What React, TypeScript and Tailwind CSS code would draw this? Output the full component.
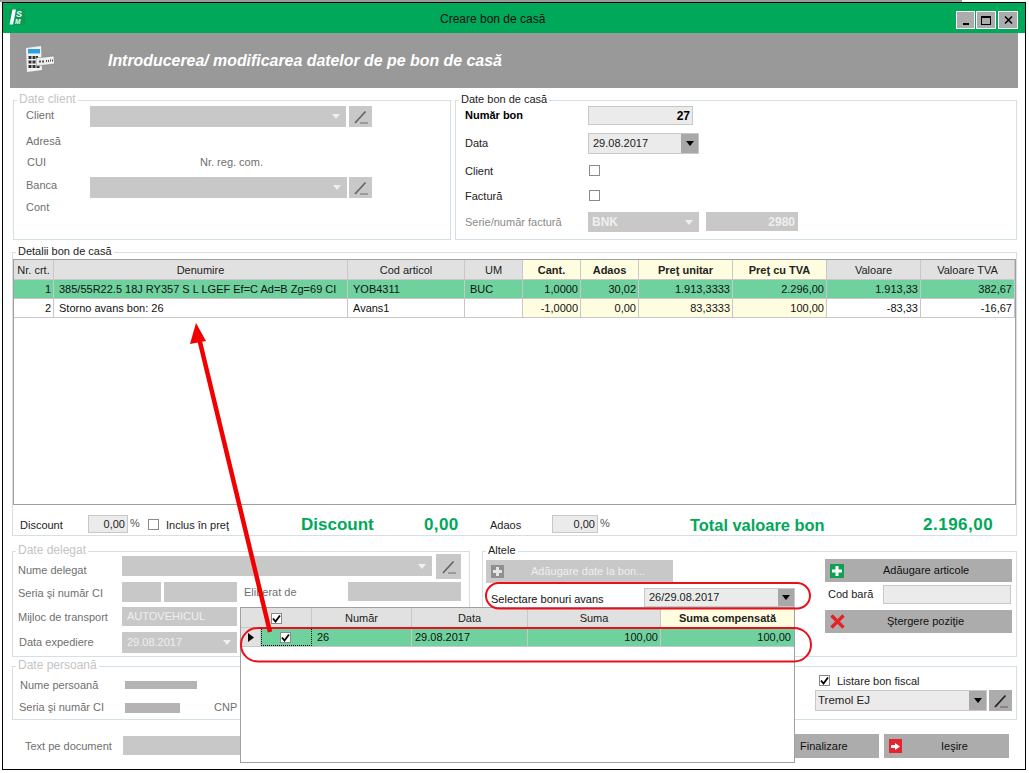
import type { ReactNode } from 'react';

const columns = [
    { label: 'Nr. crt.', w: 'w-[40px]', head: 'bg-[#e1e1e1] font-normal' },
    { label: 'Denumire', w: 'w-[294px]', head: 'bg-[#e1e1e1] font-normal' },
    { label: 'Cod articol', w: 'w-[117px]', head: 'bg-[#e1e1e1] font-normal' },
    { label: 'UM', w: 'w-[58px]', head: 'bg-[#e1e1e1] font-normal' },
    { label: 'Cant.', w: 'w-[58px]', head: 'bg-[#fffde0] font-bold' },
    { label: 'Adaos', w: 'w-[58px]', head: 'bg-[#fffde0] font-bold' },
    { label: 'Preţ unitar', w: 'w-[94px]', head: 'bg-[#fffde0] font-bold' },
    { label: 'Preţ cu TVA', w: 'w-[94px]', head: 'bg-[#fffde0] font-bold' },
    { label: 'Valoare', w: 'w-[94px]', head: 'bg-[#e1e1e1] font-normal' },
    { label: 'Valoare TVA', w: 'w-[94px]', head: 'bg-[#e1e1e1] font-normal' },
];

const rows = [
    ['1', '385/55R22.5 18J RY357 S L LGEF Ef=C Ad=B Zg=69 CI', 'YOB4311', 'BUC', '1,0000', '30,02', '1.913,3333', '2.296,00', '1.913,33', '382,67'],
    ['2', 'Storno avans bon: 26', 'Avans1', '', '-1,0000', '0,00', '83,3333', '100,00', '-83,33', '-16,67'],
];

const alignRight = [true, false, false, false, true, true, true, true, true, true];

function T({ className, children }: { className: string; children: ReactNode }) {
    return <div className={`absolute whitespace-nowrap leading-[14px] ${className}`}>{children}</div>;
}

function Box({ className, children }: { className: string; children?: ReactNode }) {
    return <div className={`absolute ${className}`}>{children}</div>;
}

function Group({ className, title, titleClass }: { className: string; title?: string; titleClass?: string }) {
    return (
        <div className={`absolute border border-[#d5dfe6] ${className}`}>
            {title && (
                <div className={`absolute left-[3px] top-[-9px] bg-white px-[2px] leading-[14px] whitespace-nowrap ${titleClass}`}>{title}</div>
            )}
        </div>
    );
}

function Pen({ className, dark }: { className: string; dark?: boolean }) {
    return (
        <Box className={`flex items-center justify-center ${dark ? 'bg-[#acacac]' : 'bg-[#c8c8c8]'} ${className}`}>
            <svg width="16" height="16" viewBox="0 0 16 16">
                <path d="M2 14 L12.5 2.5" stroke={dark ? '#222' : '#666'} strokeWidth="1.8" fill="none" />
                <path d="M7 14 H15" stroke={dark ? '#777' : '#8c8c8c'} strokeWidth="1.5" fill="none" />
            </svg>
        </Box>
    );
}

function Caret({ color }: { color: string }) {
    return (
        <svg width="8" height="5" viewBox="0 0 8 5">
            <path d="M0 0 H8 L4 5 Z" fill={color} />
        </svg>
    );
}

function Check({ checked, className }: { checked?: boolean; className: string }) {
    return (
        <Box className={`w-[11px] h-[11px] border border-[#8a8a8a] bg-white flex items-center justify-center ${className}`}>
            {checked && (
                <svg width="9" height="9" viewBox="0 0 9 9">
                    <path d="M1 4.5 L3.5 7.5 L8 1.5" stroke="#000" strokeWidth="1.8" fill="none" />
                </svg>
            )}
        </Box>
    );
}

export default function App() {
    return (
        <div className="relative w-[1029px] h-[773px] overflow-hidden bg-white text-[11px] text-black [font-family:Liberation_Sans,Arial,sans-serif]">
            {/* desktop behind the window */}
            <Box className="left-0 top-0 w-[962px] h-[2px] bg-[#9a9a9a]" />

            {/* window frame */}
            <Box className="left-[2px] top-[2px] w-[1024px] h-[768px] border border-black bg-white" />

            {/* title bar */}
            <Box className="left-[3px] top-[3px] w-[1022px] h-[30px] bg-[#00a859]" />
            <T className="left-[440px] top-[12px] text-[12px] text-[#111]">Creare bon de casă</T>
            <Box className="left-[9px] top-[9px] w-[16px] h-[16px] bg-[#0b9a55]">
                <svg width="16" height="16" viewBox="0 0 16 16" fontFamily="Liberation Sans">
                    <path d="M3.5 0.5 H7 L4 15.5 H0.5 Z" fill="#fff" />
                    <text x="7" y="8" fontSize="9" fontWeight="700" fontStyle="italic" fill="#fff">S</text>
                    <text x="6" y="15" fontSize="6.5" fontWeight="700" fontStyle="italic" fill="#fff">M</text>
                </svg>
            </Box>
            <Box className="left-[956px] top-[11px] w-[19px] h-[18px] bg-[#acacac] border border-white flex items-end justify-center pb-[3px]">
                <div className="w-[6px] h-[2px] bg-black" />
            </Box>
            <Box className="left-[976px] top-[11px] w-[20px] h-[18px] bg-[#acacac] border border-white flex items-center justify-center">
                <div className="w-[10px] h-[9px] border border-black border-t-2" />
            </Box>
            <Box className="left-[998px] top-[11px] w-[20px] h-[18px] bg-[#acacac] border border-white flex items-center justify-center">
                <svg width="9" height="8" viewBox="0 0 9 8">
                    <path d="M1 0.5 L8 7.5 M8 0.5 L1 7.5" stroke="#000" strokeWidth="1.5" />
                </svg>
            </Box>

            {/* header band */}
            <Box className="left-[10px] top-[33px] w-[1008px] h-[55px] bg-[#999999]" />
            <Box className="left-[26px] top-[46px]">
                <svg width="29" height="26" viewBox="0 0 29 26">
                    <path d="M0 2 L15 0 L16 24 L1 26 Z" fill="#f2f2f2" />
                    <rect x="2" y="3" width="12" height="4.5" fill="#2f9fe0" />
                    <g fill="#333">
                        <rect x="2.5" y="10" width="3" height="3" /><rect x="6.5" y="10" width="3" height="3" /><rect x="10" y="10" width="2" height="3" />
                        <rect x="2.5" y="14.5" width="3" height="3" /><rect x="6.5" y="14.5" width="3" height="3" />
                        <rect x="2.5" y="19" width="3" height="3" /><rect x="6.5" y="19" width="3" height="3" /><rect x="10.5" y="19" width="3" height="3" />
                    </g>
                    <path d="M10 12 L28 10 L28.5 18 L10.5 20 Z" fill="#eee" stroke="#777" strokeWidth="0.5" />
                    <path d="M13 15.5 H15 M16 15.5 H18 M20 15 H21 M22 15 H23 M24 14.6 H25 M26 14.6 H27" stroke="#555" strokeWidth="2" />
                </svg>
            </Box>
            <T className="left-[108px] top-[52px] text-[15.9px] leading-[18px] font-bold italic text-white">Introducerea/ modificarea datelor de pe bon de casă</T>

            {/* date client */}
            <Group className="left-[13px] top-[100px] w-[438px] h-[140px]" title="Date client" titleClass="text-[12px] text-[#c4c4c4]" />
            <T className="left-[26px] top-[108px] text-[#6f6f6f]">Client</T>
            <Box className="left-[90px] top-[106px] w-[256px] h-[21px] bg-[#c8c8c8] flex items-center justify-end pr-[6px]"><Caret color="#efefef" /></Box>
            <Pen className="left-[349px] top-[106px] w-[23px] h-[21px]" />
            <T className="left-[26px] top-[134px] text-[#6f6f6f]">Adresă</T>
            <T className="left-[27px] top-[155px] text-[#6f6f6f]">CUI</T>
            <T className="left-[200px] top-[155px] text-[#6f6f6f]">Nr. reg. com.</T>
            <T className="left-[26px] top-[178px] text-[#6f6f6f]">Banca</T>
            <Box className="left-[90px] top-[177px] w-[257px] h-[21px] bg-[#c8c8c8] flex items-center justify-end pr-[6px]"><Caret color="#efefef" /></Box>
            <Pen className="left-[349px] top-[177px] w-[23px] h-[21px]" />
            <T className="left-[26px] top-[200px] text-[#6f6f6f]">Cont</T>

            {/* date bon de casa */}
            <Group className="left-[455px] top-[100px] w-[562px] h-[140px]" title="Date bon de casă" titleClass="text-[#222]" />
            <T className="left-[465px] top-[108px] font-bold">Număr bon</T>
            <Box className="left-[588px] top-[106px] w-[105px] h-[19px] bg-[#ebebeb] border border-[#c8c8c8] flex items-center justify-end pr-[2px] font-bold text-[12px]">27</Box>
            <T className="left-[465px] top-[136px] text-[#222]">Data</T>
            <Box className="left-[588px] top-[133px] w-[111px] h-[21px] bg-[#ebebeb] border border-[#c8c8c8] flex items-center pl-[4px] text-[#222]">29.08.2017</Box>
            <Box className="left-[681px] top-[134px] w-[17px] h-[19px] bg-[#a8a8a8] flex items-center justify-center"><Caret color="#000" /></Box>
            <T className="left-[465px] top-[164px] text-[#222]">Client</T>
            <Check className="left-[589px] top-[165px]" />
            <T className="left-[465px] top-[189px] text-[#222]">Factură</T>
            <Check className="left-[589px] top-[190px]" />
            <T className="left-[465px] top-[215px] text-[#8a8a8a]">Serie/număr factură</T>
            <Box className="left-[588px] top-[212px] w-[111px] h-[20px] bg-[#c8c8c8] flex items-center justify-between pl-[4px] pr-[6px] font-bold text-[12px] text-[#efefef]">BNK<Caret color="#efefef" /></Box>
            <Box className="left-[706px] top-[212px] w-[92px] h-[19px] bg-[#c8c8c8] flex items-center justify-end pr-[3px] font-bold text-[12px] text-[#efefef]">2980</Box>

            {/* detalii bon */}
            <Group className="left-[12px] top-[252px] w-[1005px] h-[284px]" title="Detalii bon de casă" titleClass="text-[#222]" />
            <Box className="left-[13px] top-[259px] w-[1003px] h-[246px] border border-[#a0a0a0] bg-white">
                <div className="flex h-[20px] border-b border-[#c8c8c8]">
                    {columns.map(c => (
                        <div key={c.label} className={`${c.w} ${c.head} shrink-0 border-r border-[#c8c8c8] flex items-center justify-center leading-[14px] text-[#222] whitespace-nowrap`}>
                            {c.label}
                        </div>
                    ))}
                </div>
                {rows.map((row, r) => (
                    <div key={row[0]} className={`flex h-[19px] border-b border-[#c8c8c8] ${r === 0 ? 'bg-[#6ed19e]' : 'bg-white'}`}>
                        {row.map((val, i) => (
                            <div
                                key={i}
                                className={`${columns[i].w} shrink-0 border-r border-[#c8c8c8] flex items-center leading-[14px] whitespace-nowrap px-[2px] text-[#111] ${alignRight[i] ? 'justify-end' : 'justify-start pl-[5px]'} ${i === 3 ? 'justify-center' : ''} ${r === 1 && i >= 4 && i <= 7 ? 'bg-[#fffde0]' : ''}`}
                            >
                                {val}
                            </div>
                        ))}
                    </div>
                ))}
            </Box>

            {/* discount row */}
            <T className="left-[20px] top-[518px] text-[#222]">Discount</T>
            <Box className="left-[88px] top-[515px] w-[40px] h-[18px] bg-[#ebebeb] border border-[#c8c8c8] flex items-center justify-end pr-[2px] text-[#222]">0,00</Box>
            <T className="left-[130px] top-[516px] text-[#555]">%</T>
            <Check className="left-[148px] top-[519px]" />
            <T className="left-[166px] top-[518px] text-[#222]">Inclus în preţ</T>
            <T className="left-[301px] top-[516px] text-[17px] leading-[18px] font-bold text-[#00a859]">Discount</T>
            <T className="left-[424px] top-[516px] text-[17px] leading-[18px] tracking-[0.4px] font-bold text-[#00a859]">0,00</T>
            <T className="left-[490px] top-[518px] text-[#222]">Adaos</T>
            <Box className="left-[552px] top-[515px] w-[46px] h-[18px] bg-[#ebebeb] border border-[#c8c8c8] flex items-center justify-end pr-[2px] text-[#222]">0,00</Box>
            <T className="left-[600px] top-[516px] text-[#555]">%</T>
            <T className="left-[690px] top-[516px] text-[16.4px] leading-[18px] font-bold text-[#00a859]">Total valoare bon</T>
            <T className="left-[923px] top-[516px] text-[17px] leading-[18px] tracking-[0.5px] font-bold text-[#00a859]">2.196,00</T>

            {/* date delegat */}
            <Group className="left-[12px] top-[551px] w-[458px] h-[106px]" title="Date delegat" titleClass="text-[12px] text-[#c4c4c4]" />
            <T className="left-[18px] top-[563px] text-[#6f6f6f]">Nume delegat</T>
            <Box className="left-[122px] top-[556px] w-[310px] h-[20px] bg-[#c8c8c8] flex items-center justify-end pr-[6px]"><Caret color="#efefef" /></Box>
            <Pen className="left-[436px] top-[554px] w-[25px] h-[25px]" />
            <T className="left-[18px] top-[586px] text-[#6f6f6f]">Seria şi număr CI</T>
            <Box className="left-[122px] top-[582px] w-[39px] h-[20px] bg-[#c8c8c8]" />
            <Box className="left-[164px] top-[582px] w-[73px] h-[20px] bg-[#c8c8c8]" />
            <T className="left-[244px] top-[585px] text-[#6f6f6f]">Eliberat de</T>
            <Box className="left-[348px] top-[582px] w-[113px] h-[19px] bg-[#c8c8c8]" />
            <T className="left-[18px] top-[610px] text-[#6f6f6f]">Mijloc de transport</T>
            <Box className="left-[122px] top-[607px] w-[115px] h-[19px] bg-[#c8c8c8] flex items-center pl-[5px] text-[#efefef]">AUTOVEHICUL</Box>
            <T className="left-[19px] top-[635px] text-[#6f6f6f]">Data expediere</T>
            <Box className="left-[122px] top-[632px] w-[115px] h-[21px] bg-[#c8c8c8] flex items-center justify-between pl-[5px] pr-[6px] text-[#efefef]">29.08.2017<Caret color="#efefef" /></Box>

            {/* date persoana */}
            <Group className="left-[12px] top-[666px] w-[458px] h-[54px]" title="Date persoană" titleClass="text-[12px] text-[#c4c4c4]" />
            <T className="left-[20px] top-[678px] text-[#6f6f6f]">Nume persoană</T>
            <Box className="left-[125px] top-[681px] w-[72px] h-[8px] bg-[#b4b4b4]" />
            <T className="left-[19px] top-[700px] text-[#6f6f6f]">Seria şi număr CI</T>
            <Box className="left-[125px] top-[703px] w-[55px] h-[10px] bg-[#b4b4b4]" />
            <T className="left-[214px] top-[700px] text-[#6f6f6f]">CNP</T>

            <T className="left-[25px] top-[739px] text-[#6f6f6f]">Text pe document</T>
            <Box className="left-[123px] top-[736px] w-[120px] h-[19px] bg-[#c8c8c8]" />

            {/* altele */}
            <Group className="left-[482px] top-[551px] w-[535px] h-[106px]" title="Altele" titleClass="text-[#222]" />
            <Box className="left-[486px] top-[560px] w-[187px] h-[23px] bg-[#c8c8c8] flex items-center text-[#efefef]">
                <div className="ml-[5px] w-[13px] h-[13px] bg-[#8f8f8f] flex items-center justify-center">
                    <svg width="9" height="9" viewBox="0 0 9 9"><path d="M4.5 0 V9 M0 4.5 H9" stroke="#e6e6e6" strokeWidth="3" /></svg>
                </div>
                <span className="ml-[27px] whitespace-nowrap">Adăugare date la bon...</span>
            </Box>
            <T className="left-[491px] top-[592px] text-[#111]">Selectare bonuri avans</T>
            <Box className="left-[644px] top-[588px] w-[151px] h-[19px] bg-[#ebebeb] border border-[#c8c8c8] flex items-center pl-[4px] text-[#222]">26/29.08.2017</Box>
            <Box className="left-[778px] top-[589px] w-[16px] h-[17px] bg-[#a8a8a8] flex items-center justify-center"><Caret color="#000" /></Box>

            <Box className="left-[825px] top-[559px] w-[187px] h-[23px] bg-[#acacac] flex items-center">
                <div className="ml-[5px] w-[14px] h-[14px] bg-[#0fa050] flex items-center justify-center">
                    <svg width="10" height="10" viewBox="0 0 10 10"><path d="M5 0 V10 M0 5 H10" stroke="#fff" strokeWidth="3" /></svg>
                </div>
                <span className="ml-[39px] whitespace-nowrap text-[#111]">Adăugare articole</span>
            </Box>
            <T className="left-[828px] top-[587px] text-[#222]">Cod bară</T>
            <Box className="left-[883px] top-[585px] w-[128px] h-[19px] bg-[#ebebeb] border border-[#c8c8c8]" />
            <Box className="left-[825px] top-[610px] w-[187px] h-[23px] bg-[#acacac] flex items-center">
                <svg className="ml-[5px]" width="15" height="15" viewBox="0 0 15 15"><path d="M1.5 1.5 L13.5 13.5 M13.5 1.5 L1.5 13.5" stroke="#e8202a" strokeWidth="3.2" /></svg>
                <span className="ml-[42px] whitespace-nowrap text-[#111]">Ştergere poziţie</span>
            </Box>

            {/* listare bon fiscal */}
            <Group className="left-[482px] top-[666px] w-[535px] h-[54px]" />
            <Check checked className="left-[819px] top-[675px]" />
            <T className="left-[837px] top-[674px] text-[#222]">Listare bon fiscal</T>
            <Box className="left-[815px] top-[690px] w-[172px] h-[21px] bg-[#ebebeb] border border-[#c8c8c8] flex items-center pl-[2px] text-[11.5px] text-[#222]">Tremol EJ</Box>
            <Box className="left-[969px] top-[691px] w-[17px] h-[19px] bg-[#a8a8a8] flex items-center justify-center"><Caret color="#000" /></Box>
            <Pen dark className="left-[989px] top-[690px] w-[23px] h-[21px]" />

            {/* footer buttons */}
            <Box className="left-[780px] top-[734px] w-[99px] h-[24px] bg-[#acacac] flex items-center pl-[20px] text-[#111]">Finalizare</Box>
            <Box className="left-[884px] top-[734px] w-[125px] h-[24px] bg-[#acacac] flex items-center text-[#111]">
                <div className="ml-[5px] w-[13px] h-[14px] bg-[#e4252f] flex items-center justify-center">
                    <svg width="9" height="7" viewBox="0 0 9 7"><path d="M0 2 H4 V0 L9 3.5 L4 7 V5 H0 Z" fill="#fff" /></svg>
                </div>
                <span className="ml-[39px]">Ieşire</span>
            </Box>

            {/* popup grid */}
            <Box className="left-[240px] top-[607px] w-[555px] h-[156px] border border-[#a0a0a0] bg-white">
                <div className="flex h-[20px] border-b border-[#c8c8c8] bg-[#e1e1e1] text-[#222] leading-[14px]">
                    <div className="w-[71px] shrink-0 border-r border-[#c8c8c8] relative"><Check checked className="left-[30px] top-[5px]" /></div>
                    <div className="w-[100px] shrink-0 border-r border-[#c8c8c8] flex items-center justify-center">Număr</div>
                    <div className="w-[116px] shrink-0 border-r border-[#c8c8c8] flex items-center justify-center">Data</div>
                    <div className="w-[133px] shrink-0 border-r border-[#c8c8c8] flex items-center justify-center">Suma</div>
                    <div className="w-[133px] shrink-0 bg-[#fffde0] font-bold flex items-center justify-center whitespace-nowrap">Suma compensată</div>
                </div>
                <div className="flex h-[19px] border-b border-[#c8c8c8] text-[#111] leading-[14px]">
                    <div className="w-[20px] shrink-0 bg-[#e1e1e1] border-r border-[#c8c8c8] flex items-center justify-center">
                        <svg width="6" height="9" viewBox="0 0 6 9"><path d="M0 0 L6 4.5 L0 9 Z" fill="#000" /></svg>
                    </div>
                    <div className="w-[51px] shrink-0 bg-[#6ed19e] border border-dotted border-black relative"><Check checked className="left-[18px] top-[3px]" /></div>
                    <div className="w-[100px] shrink-0 bg-[#6ed19e] border-r border-[#c8c8c8] flex items-center pl-[5px]">26</div>
                    <div className="w-[116px] shrink-0 bg-[#6ed19e] border-r border-[#c8c8c8] flex items-center pl-[3px]">29.08.2017</div>
                    <div className="w-[133px] shrink-0 bg-[#6ed19e] border-r border-[#c8c8c8] flex items-center justify-end pr-[2px]">100,00</div>
                    <div className="w-[133px] shrink-0 bg-[#6ed19e] flex items-center justify-end pr-[3px]">100,00</div>
                </div>
            </Box>

            {/* red annotations */}
            <svg className="absolute left-0 top-0 pointer-events-none" width="1029" height="773" viewBox="0 0 1029 773">
                <rect x="486" y="583" width="324" height="25.5" rx="13" fill="none" stroke="#e8101c" strokeWidth="2" />
                <rect x="241" y="628" width="570" height="33.5" rx="17" fill="none" stroke="#e8101c" strokeWidth="2" />
                <path d="M270 632 L199 338" stroke="#f00000" strokeWidth="4.5" fill="none" />
                <path d="M196 323 L206 341 L190 344 Z" fill="#f00000" />
            </svg>
        </div>
    );
}
